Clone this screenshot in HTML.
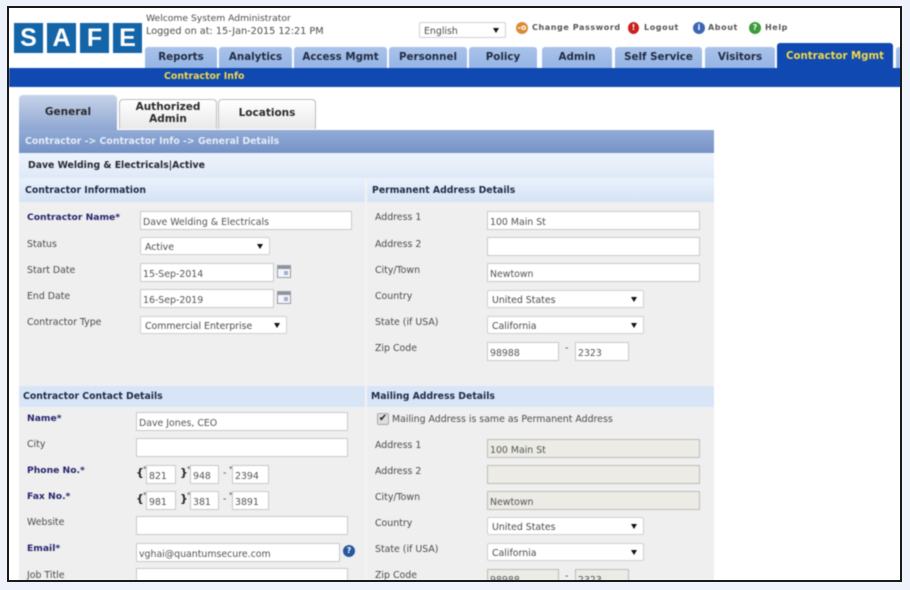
<!DOCTYPE html>
<html><head><meta charset="utf-8"><style>
html,body{margin:0;padding:0;width:910px;height:590px;overflow:hidden;background:#eef3fb}
*{box-sizing:border-box}
body{font-family:"DejaVu Sans","Liberation Sans",sans-serif;color:#4a4a4a;font-size:9px}
#f{position:absolute;left:7px;top:6px;width:895px;height:576px;border:2px solid #1a1a1a;background:#fff;overflow:hidden}
#w{position:absolute;left:-9px;top:-8px;width:910px;height:590px;filter:blur(.5px)}
#w div,#w span{position:absolute;white-space:nowrap}
.lg{background:#1464a8;color:#fff;font:bold 25px/30px "Liberation Sans",sans-serif;text-align:center;top:23px;height:30px;width:29px}
.t{top:47px;height:21px;background:linear-gradient(#a9c3ea,#95b5e4);border-radius:3px 3px 0 0;color:#222c44;font-weight:bold;font-size:10.3px;line-height:21px;text-align:center}
.st{top:99px;height:30px;width:98px;background:linear-gradient(#fff,#e9e9e9);border:1px solid #bcbcbc;border-bottom:0;border-radius:4px 4px 0 0;color:#2b2b2b;font-weight:bold;font-size:10.5px;line-height:12px;text-align:center}
.h{background:linear-gradient(#eaf1fb,#d5e3f6);color:#1f2a45;font-weight:bold;font-size:9.3px;line-height:25px;height:24px}
.l{font-size:9.4px;color:#4c4c4c;line-height:12px;margin-top:1px}
.b{font-weight:bold;color:#25246e;font-size:9.2px}
.i{background:#fff;border:1px solid #c9c9c9;height:19px;line-height:19px;padding:1px 0 0 2px;font-size:9.4px;color:#555}
.d{background:#ecebe6;border-color:#bdbdb8}
.s{background:#fff;border:1px solid #d0d0d0;height:18px;line-height:19px;padding-left:4px;font-size:9.4px;color:#4c4c4c;border-radius:2px}
.s b{position:absolute;right:6px;top:6px;width:0;height:0;border:3.5px solid transparent;border-top:5px solid #111;border-bottom:0}
.c{background:#f4f5f8;border:1px solid #9a9aa8;width:14px;height:13px}
.c i{position:absolute;left:0;top:0;width:12px;height:3px;background:#8f93a0}
.c u{position:absolute;left:6px;top:5px;width:4px;height:4px;background:#9fb0cc}
.m{color:#555;font-weight:bold;font-size:8px;letter-spacing:.6px;top:22px;line-height:12px}
.o{width:12px;height:12px;border-radius:50%;top:22px;color:#fff;font-size:8px;font-weight:bold;line-height:12px;text-align:center}
.p{font-weight:bold;color:#222;font-size:11px;line-height:12px}
.a{font-size:7px;color:#444;line-height:8px}
</style></head><body>
<div id="f"><div id="w">
<div class="lg" style="left:14px">S</div><div class="lg" style="left:47px">A</div><div class="lg" style="left:80px">F</div><div class="lg" style="left:113px">E</div>
<div class="l" style="left:146px;top:12px;font-size:9.2px">Welcome System Administrator</div>
<div class="l" style="left:146px;top:25px;font-size:9.7px">Logged on at: 15-Jan-2015 12:21 PM</div>
<div class="s" style="left:419px;top:22px;width:87px;height:16px;line-height:17px">English<b style="top:5px"></b></div>
<div class="o" style="left:516px;background:#d98a35">-o</div><div class="m" style="left:532px">Change Password</div>
<div class="o" style="left:628px;background:#c8201f;width:11px">!</div><div class="m" style="left:644px">Logout</div>
<div class="o" style="left:693px;background:#3d65b5">i</div><div class="m" style="left:708px">About</div>
<div class="o" style="left:749px;background:#3b9a3b">?</div><div class="m" style="left:765px">Help</div>
<div class="t" style="left:145px;width:72px">Reports</div>
<div class="t" style="left:219px;width:73px">Analytics</div>
<div class="t" style="left:294px;width:93px">Access Mgmt</div>
<div class="t" style="left:389px;width:78px">Personnel</div>
<div class="t" style="left:469px;width:68px">Policy</div>
<div class="t" style="left:542px;width:70px">Admin</div>
<div class="t" style="left:615px;width:87px">Self Service</div>
<div class="t" style="left:705px;width:70px">Visitors</div>
<div class="t" style="left:896px;width:8px"></div>
<div style="left:9px;top:68px;width:892px;height:19px;background:#0f49b1"></div>
<div class="t" style="left:777px;top:43px;width:116px;height:25px;line-height:27px;background:#0f49b1;color:#f2d94a;font-size:10.2px">Contractor Mgmt</div>
<div style="left:164px;top:70px;color:#f2d94a;font-weight:bold;font-size:9.4px;line-height:14px">Contractor Info</div>
<div class="st" style="left:19px;top:95px;height:35px;background:linear-gradient(#c6d3e9,#8fa7d2);border:0;line-height:34px;z-index:1">General</div>
<div class="st" style="left:119px;padding-top:1px">Authorized<br>Admin</div>
<div class="st" style="left:218px;line-height:27px">Locations</div>
<div style="left:19px;top:130px;width:695px;height:23px;background:linear-gradient(#92abd6,#7693c6);color:#e4ecf8;font-weight:bold;font-size:9.35px;line-height:24px;padding-left:6px">Contractor -&gt; Contractor Info -&gt; General Details</div>
<div style="left:19px;top:153px;width:695px;height:25px;background:linear-gradient(#eef4fc,#dfe9f7);color:#26262e;font-weight:bold;font-size:9.3px;line-height:25px;padding-left:9px">Dave Welding &amp; Electricals|Active</div>
<div style="left:19px;top:178px;width:695px;height:404px;background:#efefef"></div>
<div style="left:365px;top:178px;width:2px;height:404px;background:#f3f3f3"></div>
<div class="h" style="left:19px;top:178px;width:346px;padding-left:6px">Contractor Information</div>
<div class="h" style="left:367px;top:178px;width:347px;padding-left:5px">Permanent Address Details</div>
<div class="l b" style="left:27px;top:211px">Contractor Name*</div>
<div class="i" style="left:140px;top:211px;width:212px">Dave Welding &amp; Electricals</div>
<div class="l" style="left:27px;top:238px">Status</div>
<div class="s" style="left:140px;top:237px;width:130px">Active<b></b></div>
<div class="l" style="left:27px;top:264px">Start Date</div>
<div class="i" style="left:140px;top:263px;width:134px">15-Sep-2014</div><div class="c" style="left:277px;top:265px"><i></i><u></u></div>
<div class="l" style="left:27px;top:290px">End Date</div>
<div class="i" style="left:140px;top:289px;width:134px">16-Sep-2019</div><div class="c" style="left:277px;top:291px"><i></i><u></u></div>
<div class="l" style="left:27px;top:316px">Contractor Type</div>
<div class="s" style="left:140px;top:316px;width:147px">Commercial Enterprise<b></b></div>
<div class="l" style="left:375px;top:211px">Address 1</div><div class="i" style="left:487px;top:211px;width:213px">100 Main St</div>
<div class="l" style="left:375px;top:238px">Address 2</div><div class="i" style="left:487px;top:237px;width:213px"></div>
<div class="l" style="left:375px;top:264px">City/Town</div><div class="i" style="left:487px;top:263px;width:213px">Newtown</div>
<div class="l" style="left:375px;top:290px">Country</div><div class="s" style="left:487px;top:290px;width:157px">United States<b></b></div>
<div class="l" style="left:375px;top:316px">State (if USA)</div><div class="s" style="left:487px;top:316px;width:157px">California<b></b></div>
<div class="l" style="left:375px;top:342px">Zip Code</div><div class="i" style="left:487px;top:342px;width:72px">98988</div>
<div class="l" style="left:565px;top:342px">-</div><div class="i" style="left:575px;top:342px;width:54px">2323</div>
<div class="h" style="left:19px;top:386px;width:346px;height:21px;line-height:21px;padding-left:4px;background:#d8e5f7">Contractor Contact Details</div>
<div class="h" style="left:367px;top:386px;width:347px;height:21px;line-height:21px;padding-left:4px;background:#d8e5f7">Mailing Address Details</div>
<div class="l b" style="left:27px;top:412px">Name*</div><div class="i" style="left:136px;top:412px;width:212px">Dave Jones, CEO</div>
<div class="l" style="left:27px;top:438px">City</div><div class="i" style="left:136px;top:438px;width:212px"></div>
<div class="l b" style="left:27px;top:464px">Phone No.*</div>
<div class="p" style="left:136px;top:467px">{</div><div class="a" style="left:143px;top:465px">*</div><div class="i" style="left:146px;top:465px;width:30px">821</div>
<div class="p" style="left:180px;top:467px">}</div><div class="a" style="left:187px;top:465px">*</div><div class="i" style="left:190px;top:465px;width:29px">948</div>
<div class="l" style="left:223px;top:467px">-</div><div class="a" style="left:229px;top:465px">*</div><div class="i" style="left:232px;top:465px;width:37px">2394</div>
<div class="l b" style="left:27px;top:490px">Fax No.*</div>
<div class="p" style="left:136px;top:493px">{</div><div class="a" style="left:143px;top:491px">*</div><div class="i" style="left:146px;top:491px;width:30px">981</div>
<div class="p" style="left:180px;top:493px">}</div><div class="a" style="left:187px;top:491px">*</div><div class="i" style="left:190px;top:491px;width:29px">381</div>
<div class="l" style="left:223px;top:493px">-</div><div class="a" style="left:229px;top:491px">*</div><div class="i" style="left:232px;top:491px;width:37px">3891</div>
<div class="l" style="left:27px;top:516px">Website</div><div class="i" style="left:136px;top:516px;width:212px"></div>
<div class="l b" style="left:27px;top:542px">Email*</div><div class="i" style="left:136px;top:543px;width:204px">vghai@quantumsecure.com</div>
<div class="o" style="left:343px;top:545px;background:#26589f">?</div>
<div class="l" style="left:27px;top:569px">Job Title</div><div class="i" style="left:136px;top:568px;width:212px"></div>
<div style="left:377px;top:413px;width:12px;height:12px;background:#ddd;border:1px solid #aaa;border-radius:2px;color:#222;font-size:10px;line-height:10px;text-align:center">✔</div>
<div class="l" style="left:392px;top:413px">Mailing Address is same as Permanent Address</div>
<div class="l" style="left:375px;top:439px">Address 1</div><div class="i d" style="left:487px;top:439px;width:213px">100 Main St</div>
<div class="l" style="left:375px;top:465px">Address 2</div><div class="i d" style="left:487px;top:465px;width:213px"></div>
<div class="l" style="left:375px;top:491px">City/Town</div><div class="i d" style="left:487px;top:491px;width:213px">Newtown</div>
<div class="l" style="left:375px;top:517px">Country</div><div class="s" style="left:487px;top:517px;width:157px">United States<b></b></div>
<div class="l" style="left:375px;top:543px">State (if USA)</div><div class="s" style="left:487px;top:543px;width:157px">California<b></b></div>
<div class="l" style="left:375px;top:569px">Zip Code</div><div class="i d" style="left:487px;top:569px;width:72px">98988</div>
<div class="l" style="left:565px;top:570px">-</div><div class="i d" style="left:575px;top:569px;width:54px">2323</div>
</div></div>
</body></html>
